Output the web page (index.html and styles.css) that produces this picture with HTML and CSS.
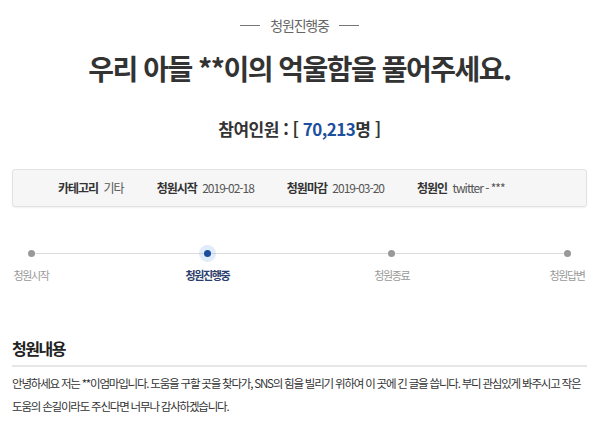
FILE: index.html
```html
<!DOCTYPE html>
<html lang="ko">
<head>
<meta charset="UTF-8">
<meta name="viewport" content="width=device-width, initial-scale=1.0">
<title>청원진행중</title>
<link rel="stylesheet" href="styles.css">
</head>
<body>
<div class="petition">
  <div class="status"><span class="status-line"></span>청원진행중<span class="status-line"></span></div>
  <h1 class="title">우리 아들 **이의 억울함을 풀어주세요.</h1>
  <p class="count">참여인원 : [ <span class="count-num">70,213</span>명 ]</p>

  <ul class="info">
    <li><b>카테고리</b> 기타</li>
    <li><b>청원시작</b> 2019-02-18</li>
    <li><b>청원마감</b> 2019-03-20</li>
    <li><b>청원인</b> twitter - ***</li>
  </ul>

  <div class="steps">
    <div class="step"><span class="dot"></span><span class="step-label">청원시작</span></div>
    <div class="step active"><span class="dot"></span><span class="step-label">청원진행중</span></div>
    <div class="step"><span class="dot"></span><span class="step-label">청원종료</span></div>
    <div class="step"><span class="dot"></span><span class="step-label">청원답변</span></div>
  </div>

  <h2 class="section-title">청원내용</h2>
  <p class="content">안녕하세요 저는 **이엄마입니다. 도움을 구할 곳을 찾다가, SNS의 힘을 빌리기 위하여 이 곳에 긴 글을 씁니다. 부디 관심있게 봐주시고 작은 도움의 손길이라도 주신다면 너무나 감사하겠습니다.</p>
</div>
</body>
</html>
```

FILE: styles.css
```css
body {
  margin: 0;
  padding: 0 13px 0 12px;
  background: #fff;
  color: #333;
  font-family: "Noto Sans CJK KR", "Noto Sans", sans-serif;
}
.status {
  display: flex;
  justify-content: center;
  align-items: center;
  gap: 10px;
  margin-top: 15px;
  height: 20px;
  font-size: 14px;
  letter-spacing: -1.2px;
  color: #666;
}
.status-line {
  width: 20px;
  height: 1px;
  background: #777;
}
.title {
  margin: 15px 0 0;
  text-align: center;
  font-size: 28px;
  line-height: 36px;
  font-weight: bold;
  letter-spacing: -1.5px;
  color: #333;
}
.count {
  margin: 31px 0 0;
  text-align: center;
  font-size: 17px;
  line-height: 24px;
  font-weight: bold;
  letter-spacing: -0.5px;
  color: #333;
}
.count-num {
  color: #1d4f9e;
}
.info {
  display: flex;
  gap: 33px;
  list-style: none;
  margin: 28px 0 0;
  padding: 0 0 0 45px;
  height: 36px;
  line-height: 36px;
  background: #f6f6f6;
  border: 1px solid #e2e2e2;
  border-radius: 3px;
  box-shadow: 0 1px 2px rgba(0, 0, 0, 0.06);
  font-size: 12px;
  letter-spacing: -1px;
  color: #555;
}
.info b {
  color: #333;
  margin-right: 3px;
}
.steps {
  position: relative;
  display: grid;
  grid-template-columns: 40px 136fr 40px 144fr 40px 135fr 40px;
  margin: 36px 0 0 -1px;
}
.steps::before {
  content: "";
  position: absolute;
  left: 20px;
  right: 20px;
  top: 10px;
  height: 1px;
  background: #dcdcdc;
}
.step {
  display: flex;
  flex-direction: column;
  align-items: center;
  width: 40px;
}
.step:nth-child(2) { grid-column: 3; }
.step:nth-child(3) { grid-column: 5; }
.step:nth-child(4) { grid-column: 7; }
.dot {
  position: relative;
  width: 7px;
  height: 7px;
  margin: 6.5px 0;
  border-radius: 50%;
  background: #999;
}
.step.active .dot {
  background: #1a4c9c;
  box-shadow: 0 0 0 5px rgba(120, 170, 235, 0.22);
}
.step-label {
  margin-top: 4px;
  white-space: nowrap;
  font-size: 11px;
  line-height: 16px;
  letter-spacing: -1.4px;
  color: #999;
}
.step.active .step-label {
  font-weight: bold;
  color: #2a3d6b;
}
.section-title {
  margin: 54px 0 0;
  padding-bottom: 6px;
  border-bottom: 2px solid #e6e6e6;
  font-size: 16px;
  line-height: 22px;
  font-weight: bold;
  letter-spacing: -1.5px;
  color: #222;
}
.content {
  margin: 5px 0 0;
  font-size: 11.5px;
  line-height: 23px;
  letter-spacing: -1.2px;
  color: #333;
}
```
